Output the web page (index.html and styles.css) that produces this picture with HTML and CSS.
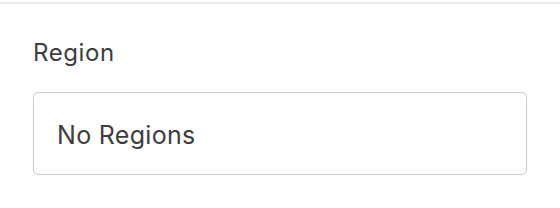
FILE: index.html
```html
<!DOCTYPE html>
<html lang="en">
<head>
    <meta charset="UTF-8">
    <meta name="viewport" content="width=device-width, initial-scale=1.0">
    <title>Region</title>
    <link rel="stylesheet" href="styles.css">
</head>
<body>
    <div class="divider"></div>
    <div class="field">
        <label class="field-label" for="region">Region</label>
        <div class="select-box" id="region">No Regions</div>
    </div>
</body>
</html>
```

FILE: styles.css
```css
body {
    margin: 0;
    padding: 0;
    background-color: #fff;
    color: #3d3d3f;
    font-family: Inter, "Liberation Sans", Arial, sans-serif;
}

.divider {
    height: 2px;
    margin-top: 2px;
    background-color: #edecf1;
}

.field {
    padding: 37px 33px 0;
}

.field-label {
    display: block;
    font-size: 24px;
    line-height: 24px;
    font-weight: 400;
    letter-spacing: 0.6px;
    margin-bottom: 27px;
}

.select-box {
    border: 1px solid #c9cbcf;
    border-radius: 5px;
    padding: 30px 23px 27px;
    font-size: 25px;
    line-height: 24px;
    letter-spacing: 0.3px;
}
```
